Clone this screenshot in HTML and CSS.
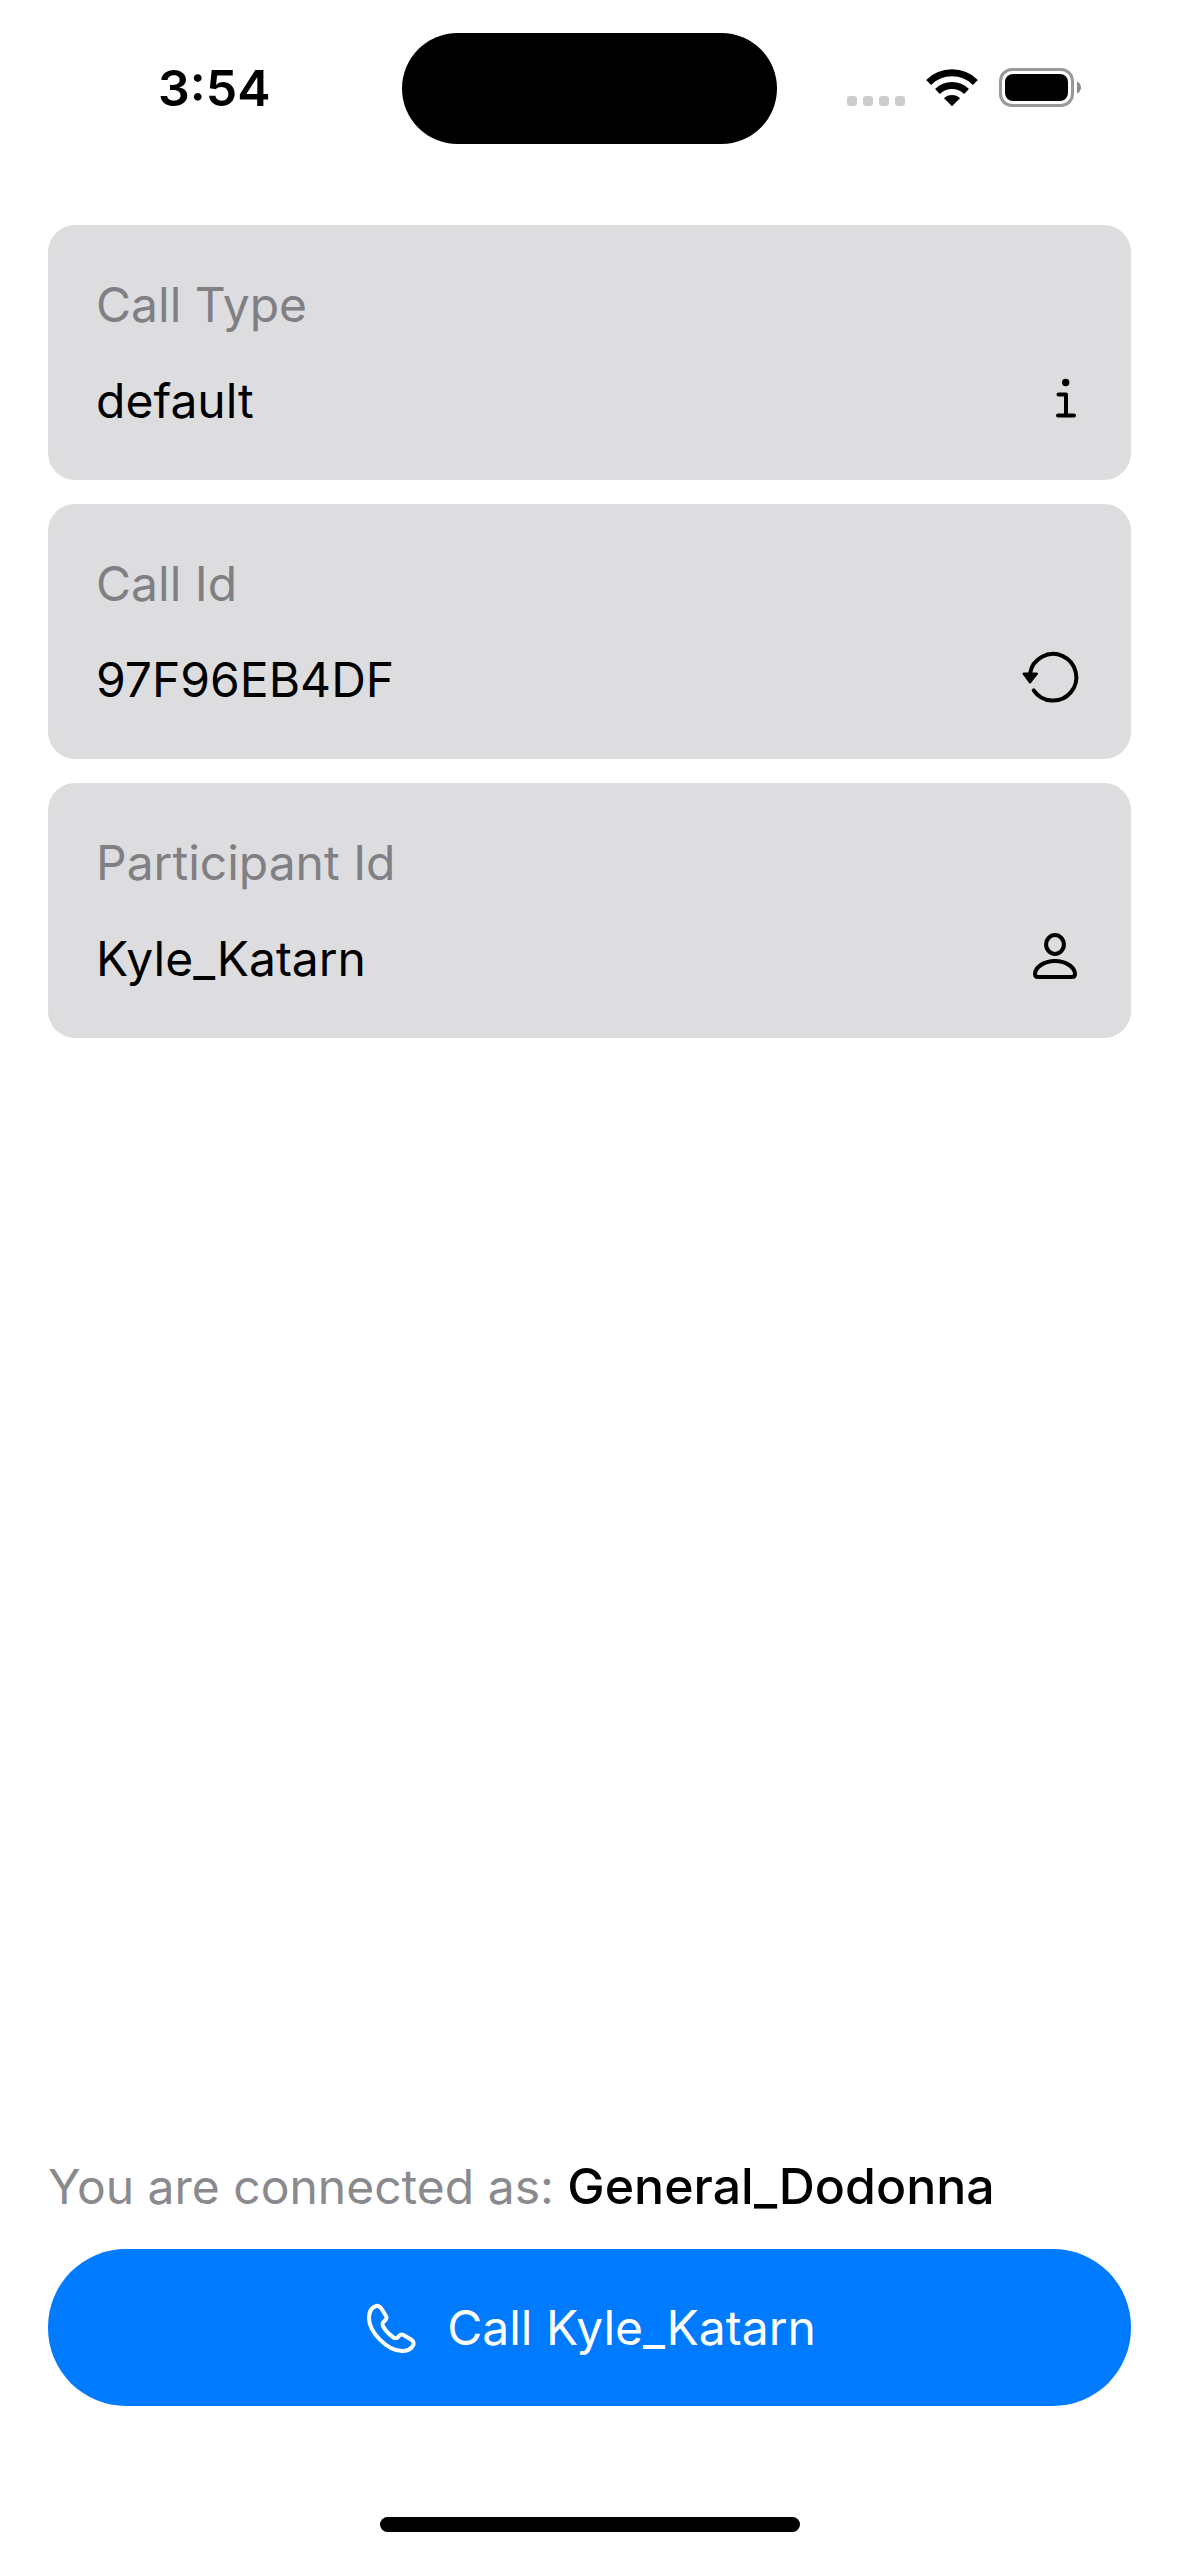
FILE: index.html
```html
<!DOCTYPE html>
<html lang="en">
<head>
  <meta charset="utf-8">
  <meta name="viewport" content="width=device-width, initial-scale=1">
  <title>Start a call</title>
  <link rel="stylesheet" href="styles.css">
</head>
<body>
  <div class="screen">
    <header class="status-bar">
      <time class="clock">3:54</time>
      <div class="island"></div>
      <div class="indicators">
        <svg class="signal" viewBox="0 0 58 39" aria-hidden="true">
          <rect x="0" y="28" width="10" height="10" rx="3"/>
          <rect x="16" y="28" width="10" height="10" rx="3"/>
          <rect x="32" y="28" width="10" height="10" rx="3"/>
          <rect x="48" y="28" width="10" height="10" rx="3"/>
        </svg>
        <svg class="wifi" viewBox="0 0 52 39" aria-hidden="true">
          <path class="wifi-arc" d="M2.6 14.4A33.4 33.4 0 0 1 49.4 14.4M11.5 23.4A20.7 20.7 0 0 1 40.5 23.4"/>
          <path d="M26 38.2L18 30.2A11.6 11.6 0 0 1 34 30.2Z"/>
        </svg>
        <svg class="battery" viewBox="0 0 83 39" aria-hidden="true">
          <rect class="battery-case" x="1.5" y="1.5" width="72" height="36" rx="11.5"/>
          <rect x="6" y="6" width="63" height="27" rx="8"/>
          <path class="battery-tip" d="M78 13.5C80.500 14.500 82 17 82 19.500S80.500 24.500 78 25.500Z"/>
        </svg>
      </div>
    </header>

    <main class="content">
      <form class="fields">
        <div class="card">
          <label class="card-label" for="call-type">Call Type</label>
          <div class="card-row">
            <input class="card-input" id="call-type" type="text" value="default">
            <button class="icon-button" type="button" aria-label="About call types">
              <svg class="icon" viewBox="0 0 64 60" aria-hidden="true">
                <circle class="solid" cx="46.700" cy="13.500" r="3.700"/>
                <path d="M39.500 25.500H47V46.500M39 46.500H55"/>
              </svg>
            </button>
          </div>
        </div>
        <div class="card">
          <label class="card-label" for="call-id">Call Id</label>
          <div class="card-row">
            <input class="card-input" id="call-id" type="text" value="97F96EB4DF">
            <button class="icon-button" type="button" aria-label="Generate a new call id">
              <svg class="icon" viewBox="0 0 64 60" aria-hidden="true">
                <path d="M14.700 42.300A23.300 23.300 0 1 0 11 25.500"/>
                <path class="solid" d="M4.500 24.500H18.200Q19.400 25 18.800 26.200L12 35Q11 36 10 35L3.700 26.200Q3.200 25 4.500 24.500Z"/>
              </svg>
            </button>
          </div>
        </div>
        <div class="card">
          <label class="card-label" for="participant-id">Participant Id</label>
          <div class="card-row">
            <input class="card-input" id="participant-id" type="text" value="Kyle_Katarn">
            <button class="icon-button" type="button" aria-label="Choose a participant">
              <svg class="icon" viewBox="0 0 64 60" aria-hidden="true">
                <ellipse cx="36" cy="17.500" rx="8.900" ry="9.500"/>
                <path d="M19 50C17 50 16 49 16 47C16 41 24 34 36 34S56 41 56 47C56 49 55 50 53 50Z"/>
              </svg>
            </button>
          </div>
        </div>
      </form>

      <section class="footer">
        <p class="connected">You are connected as: <strong class="user">General_Dodonna</strong></p>
        <button class="call-button" type="button">
          <svg class="phone" viewBox="0 0 56 56" aria-hidden="true">
            <path d="M13 6C16 5 18 8 19 9.500L23 16C24.300 18 23.500 19 22 20.500C20 22.500 18.500 23 20 26C22 30 27 35 30.500 37.500C33 39 34 38.500 35.500 36.500C37 34.500 38.500 34 40.500 35L48 39.500C51 41.500 51.500 44 49.500 46.500C47 50 43.500 51 39 51C24 50.500 6 32 6 18C6 12 8.500 7.500 13 6Z"/>
          </svg>
          <span>Call Kyle_Katarn</span>
        </button>
      </section>
    </main>
    <div class="home-indicator"></div>
  </div>
</body>
</html>
```
FILE: styles.css
```css
* {
  box-sizing: border-box;
}

body {
  margin: 0;
  background: #ffffff;
  color: #000000;
  font-family: Inter, "Liberation Sans", sans-serif;
  font-size: 48px;
  line-height: 64px;
}

button,
input {
  margin: 0;
  padding: 0;
  border: 0;
  background: none;
  color: inherit;
  font: inherit;
}

svg {
  display: block;
}

.screen {
  display: flex;
  flex-direction: column;
  min-height: 100vh;
  padding-bottom: 24px;
}

/* Status bar */

.status-bar {
  display: grid;
  grid-template-columns: 1fr 375px 1fr;
  align-items: center;
  padding: 33px 0 81px;
}

.clock {
  padding: 0 0 2px 158px;
  font-size: 50px;
  font-weight: 600;
}

.island {
  height: 111px;
  border-radius: 56px;
  background: #000000;
}

.indicators {
  display: flex;
  justify-content: flex-end;
  gap: 21px;
  padding: 0 97px 2px 0;
}

.signal {
  width: 58px;
  height: 39px;
  fill: #cccccc;
}

.wifi {
  width: 52px;
  height: 39px;
}

.wifi-arc {
  fill: none;
  stroke: #000000;
  stroke-width: 7;
}

.battery {
  width: 83px;
  height: 39px;
}

.battery-case {
  fill: none;
  stroke: #999999;
  stroke-width: 3;
}

.battery-tip {
  fill: #8c8c8c;
}

/* Fields */

.content {
  display: flex;
  flex: 1;
  flex-direction: column;
  justify-content: space-between;
  padding: 0 48px;
}

.fields {
  display: flex;
  flex-direction: column;
  gap: 24px;
}

.card {
  display: flex;
  flex-direction: column;
  gap: 32px;
  padding: 48px 48px 47px;
  border-radius: 27px;
  background: #dddddf;
}

.card-label {
  color: #808084;
}

.card-row {
  display: flex;
  align-items: flex-start;
}

.card-input {
  flex: 1;
  min-width: 0;
  height: 64px;
  outline: none;
}

.icon {
  width: 64px;
  height: 60px;
  fill: none;
  stroke: #000000;
  stroke-width: 4;
  stroke-linecap: round;
  stroke-linejoin: round;
}

.solid {
  fill: #000000;
  stroke: none;
}

/* Footer */

.footer {
  display: flex;
  flex-direction: column;
  gap: 30px;
}

.connected {
  margin: 0;
  color: #8a8a8e;
}

.user {
  color: #000000;
  font-size: 50px;
  font-weight: 500;
  line-height: 60px;
}

.call-button {
  display: flex;
  align-items: center;
  justify-content: center;
  gap: 28px;
  padding: 47px 48px 46px;
  border-radius: 78px;
  background: #007aff;
  color: #ffffff;
}

.phone {
  width: 56px;
  height: 56px;
  fill: none;
  stroke: #ffffff;
  stroke-width: 4;
  stroke-linejoin: round;
}

.home-indicator {
  align-self: center;
  width: 420px;
  height: 15px;
  margin-top: 111px;
  border-radius: 8px;
  background: #000000;
}
```
